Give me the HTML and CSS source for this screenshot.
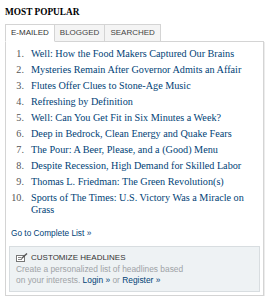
FILE: index.html
```html
<!DOCTYPE html>
<html>
<head>
<meta charset="utf-8">
<link rel="stylesheet" href="styles.css">
</head>
<body>
<div class="module">
  <h3 class="title">MOST POPULAR</h3>
  <div class="tabs">
    <span class="tab active">E-MAILED</span>
    <span class="tab">BLOGGED</span>
    <span class="tab">SEARCHED</span>
  </div>
  <div class="panel">
    <ol class="list">
      <li><span class="num">1.</span><a class="headline">Well: How the Food Makers Captured Our Brains</a></li>
      <li><span class="num">2.</span><a class="headline">Mysteries Remain After Governor Admits an Affair</a></li>
      <li><span class="num">3.</span><a class="headline">Flutes Offer Clues to Stone-Age Music</a></li>
      <li><span class="num">4.</span><a class="headline">Refreshing by Definition</a></li>
      <li><span class="num">5.</span><a class="headline">Well: Can You Get Fit in Six Minutes a Week?</a></li>
      <li><span class="num">6.</span><a class="headline">Deep in Bedrock, Clean Energy and Quake Fears</a></li>
      <li><span class="num">7.</span><a class="headline">The Pour: A Beer, Please, and a (Good) Menu</a></li>
      <li><span class="num">8.</span><a class="headline">Despite Recession, High Demand for Skilled Labor</a></li>
      <li><span class="num">9.</span><a class="headline">Thomas L. Friedman: The Green Revolution(s)</a></li>
      <li><span class="num">10.</span><a class="headline">Sports of The Times: U.S. Victory Was a Miracle on Grass</a></li>
    </ol>
    <a class="more">Go to Complete List »</a>
    <div class="custom">
      <div class="custom-head">
        <svg class="icon" width="12" height="9" viewBox="0 0 12 9">
          <rect x="0.5" y="2.5" width="8" height="6" fill="#fff" stroke="#777"/>
          <line x1="2" y1="4.5" x2="5" y2="4.5" stroke="#888"/>
          <line x1="2" y1="6.5" x2="6" y2="6.5" stroke="#888"/>
          <path d="M5.5 5.5 L11 0.5" stroke="#555" stroke-width="1.4"/>
        </svg>
        <span>CUSTOMIZE HEADLINES</span>
      </div>
      <p class="custom-text">Create a personalized list of headlines based<br>on your interests. <a class="cta">Login »</a> or <a class="cta">Register »</a></p>
    </div>
  </div>
</div>
</body>
</html>
```
FILE: styles.css
```css
html, body {
  margin: 0;
  padding: 0;
  background: #fff;
}
.module {
  width: 259px;
  padding: 7px 0 0 5px;
}
.title {
  margin: 0;
  font-family: "Liberation Serif", serif;
  font-weight: bold;
  font-size: 9.3px;
  line-height: 11px;
  color: #000;
}
.tabs {
  display: flex;
  margin-top: 6px;
  margin-bottom: -1px;
}
.tab {
  position: relative;
  height: 16px;
  line-height: 16px;
  padding: 0 5px;
  font-family: "Liberation Sans", Arial, sans-serif;
  font-size: 8px;
  color: #444;
  background: #f4f4f4;
  border: 1px solid #d4d4d4;
  border-left: none;
}
.tab:first-child {
  border-left: 1px solid #d4d4d4;
}
.tab.active {
  background: #fff;
  border-bottom-color: #fff;
  color: #333;
  z-index: 1;
}
.panel {
  border: 1px solid #d4d4d4;
  box-shadow: 1px 1px 0 #ececec;
  padding-bottom: 3px;
}
.list {
  list-style: none;
  margin: 0;
  padding: 6px 6px 0 0;
  font-family: "Liberation Serif", serif;
  font-size: 10.2px;
  line-height: 12px;
}
.list li {
  display: grid;
  grid-template-columns: 18px 1fr;
  column-gap: 7px;
  margin-bottom: 4px;
}
.num {
  text-align: right;
  color: #555;
}
.headline {
  color: #004276;
}
.more {
  display: block;
  margin: 11px 0 0 5px;
  font-family: "Liberation Sans", Arial, sans-serif;
  font-size: 8.3px;
  line-height: 12px;
  color: #004276;
}
.custom {
  margin: 7px 3px 0 3px;
  padding: 5px 6px 5px 6px;
  background: #eef2f4;
  border: 1px solid #d8dde0;
  font-family: "Liberation Sans", Arial, sans-serif;
}
.custom-head {
  display: flex;
  align-items: center;
  gap: 3px;
  font-size: 8px;
  line-height: 11px;
  color: #333;
}
.icon {
  display: block;
}
.custom-text {
  margin: 1px 0 0 0;
  font-size: 8.4px;
  line-height: 11px;
  color: #9ea3a7;
}
.cta {
  color: #004276;
}
```
